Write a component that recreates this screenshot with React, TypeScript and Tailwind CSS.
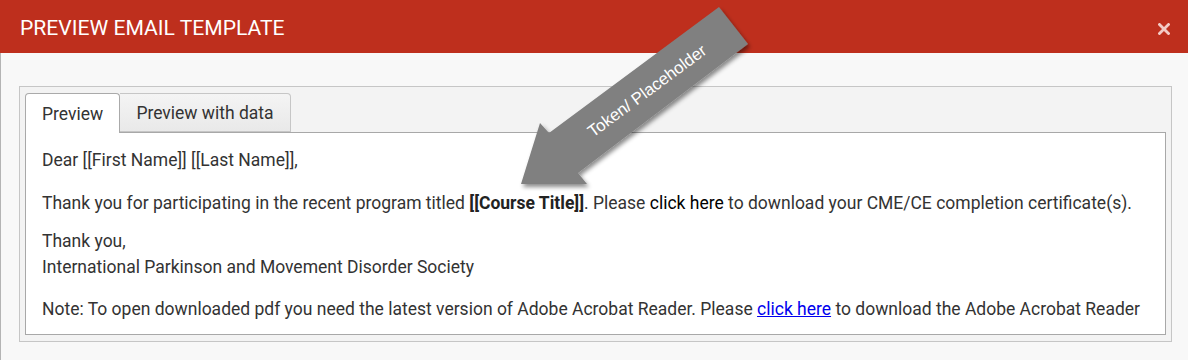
import React from "react";

export default function App() {
  return (
    <div className="relative w-[1188px] h-[360px] overflow-hidden bg-[#f8f8f8] font-['Roboto',sans-serif]">
      <div className="h-[53px] bg-[#be2f1d] flex items-center justify-between pl-5 pr-[18px]">
        <span className="text-white text-[21.1px] leading-none mt-[2px]">PREVIEW EMAIL TEMPLATE</span>
        <svg width="12" height="12" viewBox="0 0 12 12" className="mt-[5px]">
          <path d="M1.5 1.5 L10.5 10.5 M10.5 1.5 L1.5 10.5" stroke="#f3cbc5" strokeWidth="2.8" strokeLinecap="square" />
        </svg>
      </div>
      <div className="h-[307px] border-l border-[#b4b4b4] pl-[18px] pt-[33px]">
        <div className="w-[1153px] border border-[#c6c6c6] bg-[#f3f3f3] px-[5px] pt-[6px] pb-[6px]">
          <div className="flex h-[39px] relative z-10">
            <div className="w-[95px] h-[40px] bg-white border border-b-0 border-[#aaaaaa] rounded-t-[4px] flex items-center justify-center text-[17.5px] text-[#333] pt-[1px]">
              Preview
            </div>
            <div className="w-[171px] h-[39px] bg-gradient-to-b from-[#f4f4f4] to-[#e9e9e9] border border-l-0 border-[#c6c6c6] rounded-tr-[4px] flex items-center justify-center text-[17.5px] text-[#333] pt-[1px]">
              Preview with data
            </div>
          </div>
          <div className="w-[1141px] bg-white border border-[#a8a8a8] pl-4 pt-[14px] pb-[12px] text-[17.5px] leading-[26px] text-[#333]">
            <p>Dear [[First Name]] [[Last Name]],</p>
            <p className="mt-[17px]">
              Thank you for participating in the recent program titled <b className="font-bold text-[#222]">[[Course Title]]</b>. Please <span className="text-black">click here</span> to download your CME/CE completion certificate(s).
            </p>
            <p className="mt-[12px]">Thank you,</p>
            <p>International Parkinson and Movement Disorder Society</p>
            <p className="mt-[16px]">
              Note: To open downloaded pdf you need the latest version of Adobe Acrobat Reader. Please <span className="text-[#0000ee] underline">click here</span> to download the Adobe Acrobat Reader
            </p>
          </div>
        </div>
      </div>
      <svg className="absolute left-0 top-0 pointer-events-none" width="1188" height="360">
        <defs>
          <filter id="sh" x="-20%" y="-20%" width="140%" height="140%">
            <feDropShadow dx="2" dy="3" stdDeviation="2" floodColor="#000" floodOpacity="0.45" />
          </filter>
        </defs>
        <polygon
          points="521,184 540,123 549,133 719,7 748,44 578,173 587,184"
          fill="#808080"
          filter="url(#sh)"
        />
        <text
          transform="translate(647,91) rotate(-36.5)"
          textAnchor="middle"
          dominantBaseline="central"
          fill="#ffffff"
          fontSize="16.8"
          fontFamily="'Liberation Sans', Arial, sans-serif"
        >
          Token/ Placeholder
        </text>
      </svg>
    </div>
  );
}
